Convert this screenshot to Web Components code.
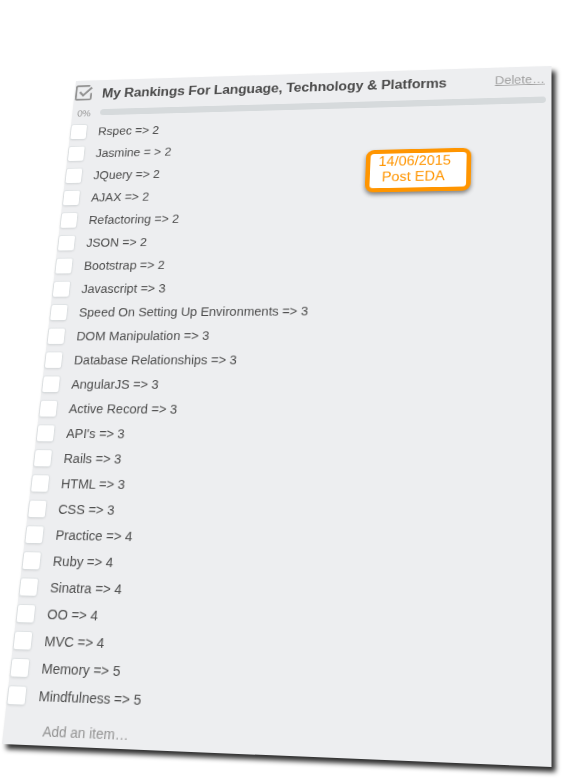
<!DOCTYPE html>
<html lang="en">
<head>
<meta charset="utf-8">
<title>Checklist</title>
<style>
  html, body { margin: 0; background: #fff; }
  body { width: 562px; height: 778px; overflow: hidden; font-family: "Liberation Sans", Arial, sans-serif; }
</style>
</head>
<body>
<tilted-sheet corners="76,81 551.5,66 551.5,767 2,744">
  <check-list>
    <list-header slot="header">My Rankings For Language, Technology &amp; Platforms<span slot="action">Delete…</span></list-header>
    <progress-row slot="header">0%</progress-row>
    <check-item>Rspec =&gt; 2</check-item>
    <check-item>Jasmine = &gt; 2</check-item>
    <check-item>JQuery =&gt; 2</check-item>
    <check-item>AJAX =&gt; 2</check-item>
    <check-item>Refactoring =&gt; 2</check-item>
    <check-item>JSON =&gt; 2</check-item>
    <check-item>Bootstrap =&gt; 2</check-item>
    <check-item>Javascript =&gt; 3</check-item>
    <check-item>Speed On Setting Up Environments =&gt; 3</check-item>
    <check-item>DOM Manipulation =&gt; 3</check-item>
    <check-item>Database Relationships =&gt; 3</check-item>
    <check-item>AngularJS =&gt; 3</check-item>
    <check-item>Active Record =&gt; 3</check-item>
    <check-item>API's =&gt; 3</check-item>
    <check-item>Rails =&gt; 3</check-item>
    <check-item>HTML =&gt; 3</check-item>
    <check-item>CSS =&gt; 3</check-item>
    <check-item>Practice =&gt; 4</check-item>
    <check-item>Ruby =&gt; 4</check-item>
    <check-item>Sinatra =&gt; 4</check-item>
    <check-item>OO =&gt; 4</check-item>
    <check-item>MVC =&gt; 4</check-item>
    <check-item>Memory =&gt; 5</check-item>
    <check-item>Mindfulness =&gt; 5</check-item>
    <span slot="footer">Add an item…</span>
  </check-list>
  <date-note slot="note"><span>14/06/2015</span><span slot="caption">Post EDA</span></date-note>
</tilted-sheet>
<script>
  const define = (name, html, extra = {}) => {
    const template = document.createElement('template');
    template.innerHTML = html;
    customElements.define(name, class extends HTMLElement {
      constructor() {
        super();
        this.attachShadow({ mode: 'open' }).append(template.content.cloneNode(true));
      }
      connectedCallback() { extra.connected?.call(this); }
    });
  };

  // A flat 543x760 sheet projected onto the four corners of its attribute (TL TR BR BL).
  define('tilted-sheet', `
    <style>
      :host { display: block; position: relative; width: 562px; height: 778px; overflow: hidden; }
      .paper { position: absolute; left: 0; top: 0; overflow: visible; }
      .paper .shade { fill: #000; fill-opacity: .82; filter: blur(2.6px); }
      .paper .face { fill: #edeef0; }
      .sheet { position: relative; width: 543px; height: 760px; transform-origin: 0 0; }
    </style>
    <svg class="paper" width="562" height="778">
      <polygon class="shade" transform="translate(4 5)"/><polygon class="face"/>
    </svg>
    <div class="sheet"><slot></slot><slot name="note"></slot></div>`, {
    connected() {
      const W = 543, H = 760;
      const corners = this.getAttribute('corners');
      const [[x0, y0], [x1, y1], [x2, y2], [x3, y3]] =
        corners.split(' ').map(p => p.split(',').map(Number));
      this.shadowRoot.querySelectorAll('polygon').forEach(p => p.setAttribute('points', corners));
      const dx1 = x1 - x2, dx2 = x3 - x2, sx = x0 - x1 + x2 - x3;
      const dy1 = y1 - y2, dy2 = y3 - y2, sy = y0 - y1 + y2 - y3;
      const den = dx1 * dy2 - dx2 * dy1;
      const g = (sx * dy2 - dx2 * sy) / den, h = (dx1 * sy - sx * dy1) / den;
      const m = [
        (x1 - x0 + g * x1) / W, (y1 - y0 + g * y1) / W, 0, g / W,
        (x3 - x0 + h * x3) / H, (y3 - y0 + h * y3) / H, 0, h / H,
        0, 0, 1, 0,
        x0, y0, 0, 1
      ];
      this.shadowRoot.querySelector('.sheet').style.transform = `matrix3d(${m.map(v => v.toFixed(9)).join()})`;
    }
  });

  define('check-list', `
    <style>
      :host { display: flex; flex-direction: column; height: 760px; box-sizing: border-box; padding: 6px 6px 0 1px; color: #4d4d4d; }
      .items { display: flex; flex-direction: column; }
      .footer { padding: 12px 0 0 40px; font-size: 14px; line-height: 18px; color: #939393; }
    </style>
    <slot name="header"></slot>
    <div class="items"><slot></slot></div>
    <div class="footer"><slot name="footer"></slot></div>`);

  define('list-header', `
    <style>
      :host { display: flex; align-items: center; height: 24px; }
      svg { width: 22px; height: 22px; flex: none; margin: -4px 11px 0 -1px; }
      .title { flex: 1; font-size: 16px; font-weight: bold; letter-spacing: -.11px; line-height: 24px; white-space: nowrap; color: #4a4a4a; }
      .action { font-size: 14px; line-height: 18px; color: #a0a0a0; text-decoration: underline; margin: -5px 1px 0 0; }
    </style>
    <svg viewBox="0 0 21 21" fill="none" stroke="#939393" stroke-width="2">
      <path d="M17 2H3.5Q2 2 2 3.5V17.5Q2 19 3.5 19H17.5Q19 19 19 17.5V11"/>
      <path d="M6 9.5L10 13.8L19.3 4.2" stroke-width="2.4"/>
    </svg>
    <span class="title"><slot></slot></span>
    <span class="action"><slot name="action"></slot></span>`);

  define('progress-row', `
    <style>
      :host { display: flex; align-items: center; height: 23px; }
      .value { width: 27px; padding-left: 5px; font-size: 11px; color: #939393; padding-top: 2px; }
      .bar { flex: 1; height: 8px; border-radius: 4px; background: #d6dadc; }
    </style>
    <span class="value"><slot></slot></span><span class="bar"></span>`);

  define('check-item', `
    <style>
      :host { display: flex; align-items: center; height: 28px; font-size: 14px; white-space: nowrap; }
      .box { box-sizing: border-box; width: 18px; height: 18px; margin: -1px 14px 0 0; background: #fff;
             border-radius: 2px; box-shadow: 0 0 0 1px rgba(215,220,223,.55), 0 1px 3px rgba(0,0,0,.15); }
    </style>
    <span class="box"></span><span><slot></slot></span>`);

  define('date-note', `
    <style>
      :host { position: absolute; left: 341.5px; top: 99px; width: 115px; height: 52px; box-sizing: border-box;
              display: flex; flex-direction: column; align-items: center; padding: 1px 7px 0 0;
              border: 5px solid #ff9500; border-radius: 9px; background: #fff; color: #ff9500;
              font-size: 15.8px; line-height: 18.5px; box-shadow: 0 3px 5px rgba(0,0,0,.45); }
      div + div { margin-left: -2px; }
    </style>
    <div><slot></slot></div><div><slot name="caption"></slot></div>`);
</script>
</body>
</html>
